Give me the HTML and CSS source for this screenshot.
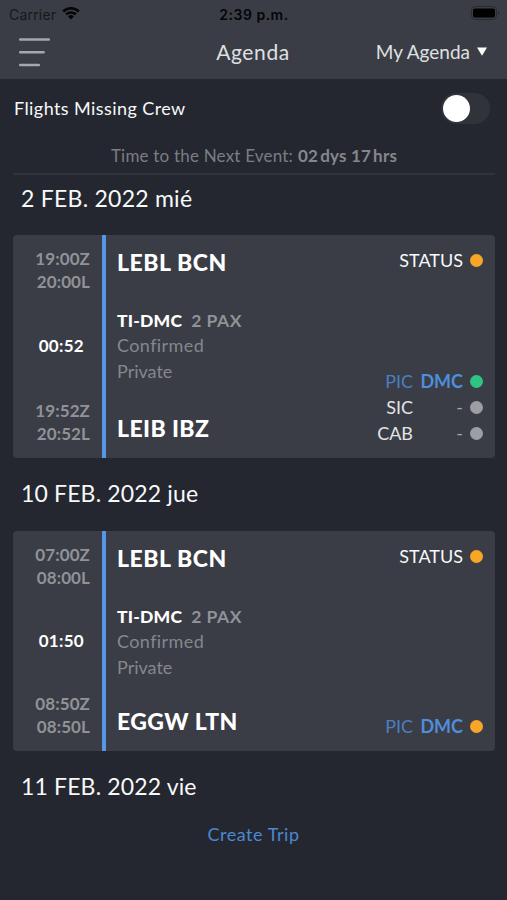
FILE: index.html
```html
<!DOCTYPE html>
<html lang="es">
<head>
<meta charset="utf-8">
<title>Agenda</title>
<link rel="stylesheet" href="styles.css">
</head>
<body>
<header class="top">
  <div class="statusbar">
    <div class="carrier"><span>Carrier</span>
      <svg class="wifi" width="18" height="14" viewBox="0 0 18 14"><path d="M0.3 4.6A12.4 12.4 0 0 1 17.7 4.6L15.9 6.4A9.8 9.8 0 0 0 2.1 6.4ZM3.2 7.5A8.3 8.3 0 0 1 14.8 7.5L13 9.3A5.7 5.7 0 0 0 5 9.3ZM6.1 10.4A4.2 4.2 0 0 1 11.9 10.4L9 13.4Z"/></svg>
    </div>
    <div class="clock">2:39 p.m.</div>
    <svg class="battery" width="29" height="14" viewBox="0 0 29 14"><rect x="0.5" y="0.5" width="25" height="13" rx="4" fill="none" stroke="#282a30"/><rect x="2" y="2.5" width="22" height="9" rx="2"/><path d="M27 5Q29.6 7 27 9Z" fill="#24262b"/></svg>
  </div>
  <nav class="navbar">
    <svg class="menu" width="31" height="30" viewBox="0 0 31 30"><path d="M1.2 1.5H29.8M1.2 14.2H24.6M1.2 27H19.8"/></svg>
    <h1 class="title">Agenda</h1>
    <div class="picker"><span>My Agenda</span><svg width="10" height="9" viewBox="0 0 10 9"><path d="M0 0.5H10L5 8.7Z"/></svg></div>
  </nav>
</header>
<main>
  <div class="filter"><span class="filter-label">Flights Missing Crew</span><span class="switch"><span class="knob"></span></span></div>
  <div class="countdown"><span class="count-label">Time to the Next Event:</span><span class="count-value">02<i></i>dys 17<i></i>hrs</span></div>

  <h2 class="date first">2 FEB. 2022 mié</h2>
  <article class="card tall">
    <div class="times">
      <div class="pair"><div class="zulu">19:00Z</div><div>20:00L</div></div>
      <div class="duration">00:52</div>
      <div class="pair"><div>19:52Z</div><div>20:52L</div></div>
    </div>
    <div class="route">
      <div class="airport">LEBL BCN</div>
      <div class="info">
        <div class="plane"><b>TI-DMC</b><span>2 PAX</span></div>
        <div class="state">Confirmed</div>
        <div class="kind">Private</div>
      </div>
      <div class="airport arrival">LEIB IBZ</div>
    </div>
    <div class="side">
      <div class="status"><span>STATUS</span><i class="dot orange"></i></div>
      <div class="crew">
        <span class="role blue">PIC</span><b class="blue">DMC</b><i class="dot green"></i>
        <span class="role">SIC</span><span class="none">-</span><i class="dot"></i>
        <span class="role">CAB</span><span class="none">-</span><i class="dot"></i>
      </div>
    </div>
  </article>

  <h2 class="date">10 FEB. 2022 jue</h2>
  <article class="card">
    <div class="times">
      <div class="pair"><div class="zulu">07:00Z</div><div>08:00L</div></div>
      <div class="duration">01:50</div>
      <div class="pair"><div>08:50Z</div><div>08:50L</div></div>
    </div>
    <div class="route">
      <div class="airport">LEBL BCN</div>
      <div class="info">
        <div class="plane"><b>TI-DMC</b><span>2 PAX</span></div>
        <div class="state">Confirmed</div>
        <div class="kind">Private</div>
      </div>
      <div class="airport arrival">EGGW LTN</div>
    </div>
    <div class="side">
      <div class="status"><span>STATUS</span><i class="dot orange"></i></div>
      <div class="crew">
        <span class="role blue">PIC</span><b class="blue">DMC</b><i class="dot orange"></i>
      </div>
    </div>
  </article>

  <h2 class="date last">11 FEB. 2022 vie</h2>
  <a class="create">Create Trip</a>
</main>
</body>
</html>
```
FILE: styles.css
```css
* { box-sizing: border-box; }
body { margin: 0; height: 900px; overflow: hidden; background: #24272f; color: #f8f9fa; font-family: Lato, sans-serif; font-size: 17px; font-variant-ligatures: none; }
h1, h2 { margin: 0; font-weight: 400; }
i { font-style: normal; }
.top { height: 79px; background: #3a3d45; }
.statusbar { height: 28px; padding: 0 8px 0 9px; display: grid; grid-template-columns: 1fr auto 1fr; align-items: center; color: #050506; font-family: Inter, sans-serif; font-size: 14px; }
.carrier { display: flex; align-items: center; gap: 6px; color: #17181b; letter-spacing: 0.2px; }
.wifi { fill: #050506; margin-top: -2px; }
.clock { font-weight: 600; letter-spacing: 0.5px; }
.battery { justify-self: end; margin: -2px -1px 0 0; }
.navbar { height: 50px; padding: 0 20px 0 19px; display: grid; grid-template-columns: 1fr auto 1fr; align-items: center; }
.menu { stroke: #a5a7ac; stroke-width: 2.6; stroke-linecap: round; }
.title { margin-top: -3px; font-size: 21px; color: #dfe0e2; letter-spacing: 0.6px; }
.picker { margin-top: -3px; justify-self: end; display: flex; align-items: center; gap: 7px; font-size: 19px; color: #dfe0e2; }
.picker svg { fill: #fff; }
.filter { height: 58px; padding: 0 17px 0 14px; display: flex; align-items: center; justify-content: space-between; font-size: 18px; letter-spacing: 0.42px; }
.switch { width: 49px; height: 31px; padding-left: 2px; border-radius: 16px; background: #30333a; display: flex; align-items: center; }
.knob { width: 27px; height: 27px; border-radius: 50%; background: #fff; }
.countdown { height: 38px; margin: 0 12px 0 13px; border-bottom: 2px solid #30333b; display: flex; justify-content: center; align-items: center; gap: 5px; color: #7b7d83; letter-spacing: 0.2px; }
.count-value { font-weight: 700; color: #85878c; }
.count-value i { display: inline-block; width: 2px; }
.date { height: 73px; padding-left: 21px; line-height: 71px; font-size: 23px; letter-spacing: 0.15px; }
.date.first { height: 60px; line-height: 46px; letter-spacing: 0.25px; }
.card { height: 220px; margin: 0 12px 0 13px; border-radius: 4px; background: #3a3d45; display: flex; overflow: hidden; }
.card.tall { height: 223px; }
.times { width: 93px; border-right: 4px solid #5596e6; padding: 12px 12px 13px 0; display: flex; flex-direction: column; justify-content: space-between; text-align: right; color: #909297; font-weight: 700; line-height: 23px; letter-spacing: 0.1px; }
.duration { color: #fff; padding-right: 6px; margin-top: -1px; letter-spacing: 0.3px; }
.route { flex: 1; padding: 13px 0 16px 11px; display: flex; flex-direction: column; }
.airport { font-size: 23px; font-weight: 900; line-height: 28px; color: #fff; letter-spacing: 0.55px; }
.arrival { margin-top: auto; letter-spacing: 0.4px; }
.info { margin-top: 32px; line-height: 25px; font-size: 18px; color: #85878d; }
.plane { display: flex; gap: 9px; font-size: 17.5px; font-weight: 700; color: #909297; letter-spacing: 0.5px; }
.plane b { color: #fff; letter-spacing: 0.2px; }
.state { letter-spacing: 0.4px; }
.kind { line-height: 27px; }
.side { padding: 12px 12px 12px 0; display: flex; flex-direction: column; justify-content: space-between; }
.status { display: flex; justify-content: flex-end; align-items: center; gap: 7px; line-height: 26px; font-size: 18px; }
.dot { width: 13px; height: 13px; border-radius: 50%; background: #9c9ea3; }
.dot.orange { background: #f9a626; }
.dot.green { background: #2cc584; }
.crew { display: grid; grid-template-columns: auto 43px 13px; grid-auto-rows: 26px; column-gap: 7px; align-items: center; text-align: right; font-size: 18px; color: #e3e4e6; }
.blue { color: #4f8edc; }
.role.blue { color: #4a7fc0; }
.none { color: #a3a5a9; }
.create { display: block; margin-top: -1px; text-align: center; line-height: 22px; font-size: 18px; color: #4c88d3; letter-spacing: 0.55px; }
```
